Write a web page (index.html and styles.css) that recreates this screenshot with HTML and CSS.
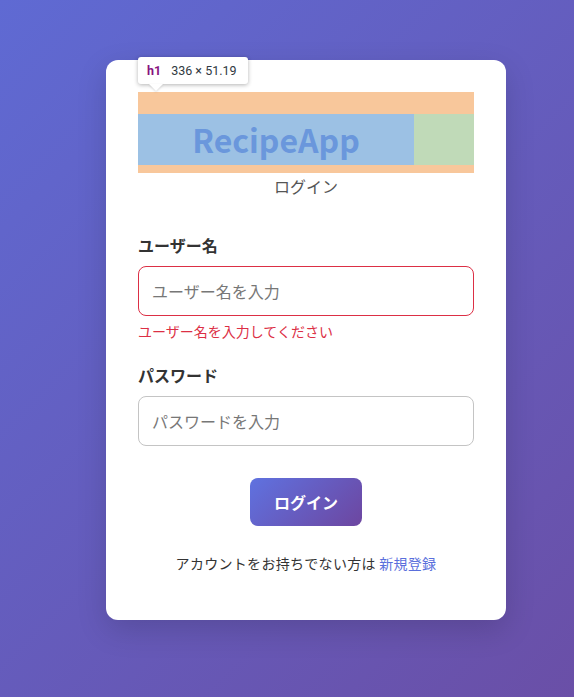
FILE: index.html
```html
<!DOCTYPE html>
<html lang="ja">
<head>
<meta charset="utf-8">
<title>ログイン - RecipeApp</title>
<link rel="stylesheet" href="styles.css">
</head>
<body>
<main class="page">
  <div class="card">
    <div class="h1-wrap">
      <div class="tooltip"><span class="tag">h1</span><span class="dims">336 × 51.19</span></div>
      <h1 class="title"><span class="content">RecipeApp</span><span class="pad"></span></h1>
    </div>
    <p class="subtitle">ログイン</p>
    <form class="form">
      <div class="group">
        <label class="label">ユーザー名</label>
        <input class="input input-error" type="text" placeholder="ユーザー名を入力">
        <p class="error">ユーザー名を入力してください</p>
      </div>
      <div class="group">
        <label class="label">パスワード</label>
        <input class="input" type="password" placeholder="パスワードを入力">
      </div>
      <div class="actions">
        <button class="btn" type="button">ログイン</button>
      </div>
    </form>
    <p class="footer">アカウントをお持ちでない方は <a class="link" href="#">新規登録</a></p>
  </div>
</main>
</body>
</html>
```
FILE: styles.css
```css
* { box-sizing: border-box; }
html, body { margin: 0; padding: 0; }
body {
  width: 574px;
  height: 697px;
  overflow: hidden;
  font-family: "Noto Sans CJK JP", "Noto Sans", sans-serif;
  background: linear-gradient(135deg, #5f6ad3 0%, #6a4fa7 100%);
}
.page {
  display: flex;
  justify-content: center;
  padding-top: 60px;
  padding-left: 38px;
}
.card {
  width: 400px;
  height: 560px;
  background: #fff;
  border-radius: 12px;
  padding: 32px;
  box-shadow: 0 10px 30px rgba(0,0,0,0.15);
}
.h1-wrap {
  position: relative;
  background: #f8c79b;
  padding: 22px 0 8px;
}
.tooltip {
  position: absolute;
  left: 0;
  top: -35px;
  height: 27px;
  width: 110px;
  background: #fff;
  border-radius: 3px;
  box-shadow: 0 1px 4px rgba(0,0,0,0.3);
  font-family: Roboto, "Liberation Sans", sans-serif;
  font-size: 12.5px;
  display: flex;
  align-items: center;
  padding-left: 9px;
  gap: 10px;
  color: #303942;
}
.tooltip::after {
  content: "";
  position: absolute;
  left: 11px;
  bottom: -7px;
  width: 0;
  height: 0;
  border-left: 7px solid transparent;
  border-right: 7px solid transparent;
  border-top: 7px solid #fff;
  filter: drop-shadow(0 1px 1px rgba(0,0,0,0.15));
}
.tag { color: #881280; font-weight: 700; }
.title {
  margin: 0;
  display: flex;
  height: 51px;
  font-size: 32px;
  line-height: 51px;
  font-weight: 700;
}
.content {
  flex: 0 0 276px;
  background: #9cc1e4;
  color: #6a97dc;
  text-align: center;
}
.pad {
  flex: 1;
  background: #c0dab8;
}
.subtitle {
  margin: 0 0 33px;
  text-align: center;
  color: #555;
  font-size: 16px;
  line-height: 26px;
}
.form { margin: 0; }
.group { margin-bottom: 20px; }
.label {
  display: block;
  font-size: 16px;
  line-height: 26px;
  font-weight: 700;
  color: #333;
  margin-bottom: 8px;
}
.input {
  display: block;
  width: 100%;
  height: 50px;
  border: 1px solid #c4c4c4;
  border-radius: 8px;
  padding: 0 13px;
  font-family: "Noto Sans CJK JP", sans-serif;
  font-size: 16px;
  color: #333;
  outline: none;
}
.input::placeholder { color: #777; }
.input-error { border-color: #dc2f45; }
.error {
  margin: 4px 0 0;
  font-size: 14px;
  line-height: 22px;
  color: #dc2f45;
}
.actions {
  display: flex;
  justify-content: center;
  margin-top: 32px;
}
.btn {
  width: 112px;
  height: 48px;
  border: none;
  border-radius: 8px;
  background: linear-gradient(135deg, #5f72e0 0%, #6d46a0 100%);
  color: #fff;
  font-family: "Noto Sans CJK JP", sans-serif;
  font-size: 16px;
  font-weight: 700;
}
.footer {
  margin: 26px 0 0;
  text-align: center;
  font-size: 14px;
  line-height: 22px;
  color: #333;
  letter-spacing: 0.3px;
}
.link { color: #5a6fdc; text-decoration: none; }
```
